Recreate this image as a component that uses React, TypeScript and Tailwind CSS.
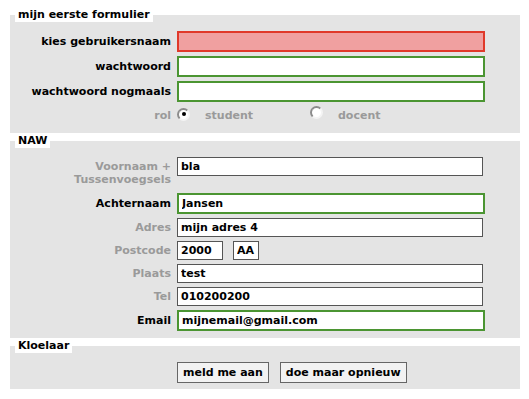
import React from "react";

const font = { fontFamily: '"DejaVu Sans", Verdana, sans-serif' };

function Label({ children, muted }: { children: React.ReactNode; muted?: boolean }) {
  return (
    <label className={`w-[167px] shrink-0 pr-[6px] text-right font-bold ${muted ? "text-[#9a9a9a]" : "text-black"}`}>
      {children}
    </label>
  );
}

function Radio({ checked }: { checked?: boolean }) {
  return (
    <span className="relative inline-flex h-[13px] w-[13px] shrink-0 items-center justify-center rounded-full border-2 border-[#8c8c8c] border-r-[#f4f4f4] border-b-[#f4f4f4] bg-white">
      {checked && <span className="h-[4px] w-[4px] rounded-full bg-black" />}
    </span>
  );
}

export default function App() {
  return (
    <div className="min-h-[399px] bg-white pt-[8px] text-[11px] leading-[13px]" style={font}>
      <fieldset className="ml-[10px] w-[510px] bg-[#e4e4e4] pb-[8px] pt-[9px]">
        <legend className="ml-[5px] bg-white px-[3px] font-bold leading-[14px] text-black">mijn eerste formulier</legend>
        <div className="flex flex-col gap-[4px]">
          <div className="flex items-center">
            <Label>kies gebruikersnaam</Label>
            <input className="h-[21px] w-[308px] border-2 border-[#e0392a] bg-[#f0a0a0] px-[3px] font-bold outline-none" />
          </div>
          <div className="flex items-center">
            <Label>wachtwoord</Label>
            <input type="password" className="h-[21px] w-[308px] border-2 border-[#4b9532] bg-white px-[3px] font-bold outline-none" />
          </div>
          <div className="flex items-center">
            <Label>wachtwoord nogmaals</Label>
            <input type="password" className="h-[21px] w-[308px] border-2 border-[#4b9532] bg-white px-[3px] font-bold outline-none" />
          </div>
          <div className="flex h-[19px] items-center">
            <Label muted>rol</Label>
            <div className="flex w-[133px] items-center">
              <span className="-mt-[4px]"><Radio checked /></span>
              <span className="ml-[15px] font-bold text-[#9a9a9a]">student</span>
            </div>
            <div className="flex items-center">
              <span className="-mt-[4px]"><Radio /></span>
              <span className="ml-[15px] font-bold text-[#9a9a9a]">docent</span>
            </div>
          </div>
        </div>
      </fieldset>

      <fieldset className="ml-[10px] mt-[1px] w-[510px] bg-[#e4e4e4] pb-[7px] pt-[9px]">
        <legend className="ml-[5px] bg-white px-[3px] font-bold leading-[14px] text-black">NAW</legend>
        <div className="flex flex-col gap-[4px]">
          <div className="mb-[3px] flex items-start">
            <label className="w-[167px] shrink-0 pr-[6px] pt-[3px] text-right font-bold text-[#9a9a9a]">
              Voornaam +<br />Tussenvoegsels
            </label>
            <input defaultValue="bla" className="h-[19px] w-[306px] border border-[#555] bg-white px-[3px] font-bold outline-none" />
          </div>
          <div className="flex items-center">
            <Label>Achternaam</Label>
            <input defaultValue="Jansen" className="h-[21px] w-[308px] border-2 border-[#4b9532] bg-white px-[3px] font-bold outline-none" />
          </div>
          <div className="flex items-center">
            <Label muted>Adres</Label>
            <input defaultValue="mijn adres 4" className="h-[19px] w-[306px] border border-[#555] bg-white px-[3px] font-bold outline-none" />
          </div>
          <div className="flex items-center">
            <Label muted>Postcode</Label>
            <input defaultValue="2000" className="h-[19px] w-[46px] border border-[#555] bg-white px-[3px] font-bold outline-none" />
            <input defaultValue="AA" className="ml-[10px] h-[19px] w-[26px] border border-[#555] bg-white px-[3px] font-bold outline-none" />
          </div>
          <div className="flex items-center">
            <Label muted>Plaats</Label>
            <input defaultValue="test" className="h-[19px] w-[306px] border border-[#555] bg-white px-[3px] font-bold outline-none" />
          </div>
          <div className="flex items-center">
            <Label muted>Tel</Label>
            <input defaultValue="010200200" className="h-[19px] w-[306px] border border-[#555] bg-white px-[3px] font-bold outline-none" />
          </div>
          <div className="flex items-center">
            <Label>Email</Label>
            <input defaultValue="mijnemail@gmail.com" className="h-[21px] w-[308px] border-2 border-[#4b9532] bg-white px-[3px] font-bold outline-none" />
          </div>
        </div>
      </fieldset>

      <fieldset className="ml-[10px] mt-[1px] w-[510px] bg-[#e4e4e4] pb-[6px] pt-[9px]">
        <legend className="ml-[5px] bg-white px-[3px] font-bold leading-[14px] text-black">Kloelaar</legend>
        <div className="flex pl-[167px] gap-[11px]">
          <button className="h-[21px] border border-[#666] bg-[#f2f2f2] px-[5px] font-bold text-black">meld me aan</button>
          <button className="h-[21px] border border-[#666] bg-[#f2f2f2] px-[5px] font-bold text-black">doe maar opnieuw</button>
        </div>
      </fieldset>
    </div>
  );
}
